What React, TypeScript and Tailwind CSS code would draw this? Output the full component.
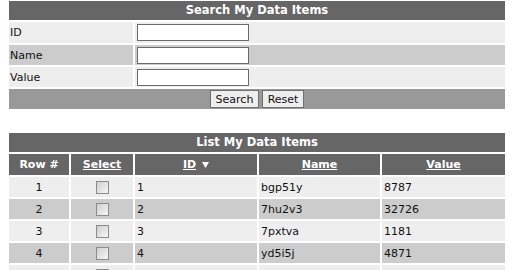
import React from "react";

const rows = [
  { n: 1, id: "1", name: "bgp51y", value: "8787" },
  { n: 2, id: "2", name: "7hu2v3", value: "32726" },
  { n: 3, id: "3", name: "7pxtva", value: "1181" },
  { n: 4, id: "4", name: "yd5i5j", value: "4871" },
  { n: 5, id: "5", name: "", value: "" },
];

function Check() {
  return (
    <div className="w-[13px] h-[13px] border border-[#8c8c8c] bg-gradient-to-br from-[#cfcfcf] to-[#f6f6f6]" />
  );
}

export default function App() {
  const font = { fontFamily: '"DejaVu Sans", Verdana, sans-serif' };
  return (
    <div className="w-[515px] h-[270px] overflow-hidden bg-white pt-[1px] pl-[9px] text-[11px] leading-none text-[#111111]" style={font}>
      <div className="w-[496px]">
        {/* Search section */}
        <div className="flex flex-col gap-[2px]">
          <div className="h-[19px] bg-[#666666] flex items-center justify-center text-white font-bold text-[11.5px]">
            Search My Data Items
          </div>
          <div className="grid grid-cols-[124px_370px] gap-[2px]">
            <div className="h-[21px] bg-[#eeeeee] flex items-center pl-[1px]">ID</div>
            <div className="h-[21px] bg-[#eeeeee] flex items-center pl-[2px]">
              <div className="w-[112px] h-[17px] border border-[#6b6b6b] bg-white" />
            </div>
            <div className="h-[20px] bg-[#cccccc] flex items-center pl-[1px]">Name</div>
            <div className="h-[20px] bg-[#cccccc] flex items-center pl-[2px]">
              <div className="w-[112px] h-[17px] border border-[#6b6b6b] bg-white" />
            </div>
            <div className="h-[20px] bg-[#eeeeee] flex items-center pl-[1px]">Value</div>
            <div className="h-[20px] bg-[#eeeeee] flex items-center pl-[2px]">
              <div className="w-[112px] h-[17px] border border-[#6b6b6b] bg-white" />
            </div>
          </div>
          <div className="h-[20px] bg-[#999999] flex items-center justify-center gap-[3px]">
            <button className="h-[18px] w-[49px] border border-[#707070] bg-[#eeeeee] text-[11px] text-[#111] leading-none flex items-center justify-center" style={font}>
              Search
            </button>
            <button className="h-[18px] w-[42px] border border-[#707070] bg-[#eeeeee] text-[11px] text-[#111] leading-none flex items-center justify-center" style={font}>
              Reset
            </button>
          </div>
        </div>

        {/* List section */}
        <div className="mt-[24px] flex flex-col gap-[2px]">
          <div className="h-[19px] bg-[#666666] flex items-center justify-center text-white font-bold text-[11.5px]">
            List My Data Items
          </div>
          <div className="grid grid-cols-[60px_62px_122px_121px_123px] gap-[2px]">
            <div className="h-[21px] bg-[#666666] flex items-center justify-center text-white font-bold">Row #</div>
            <div className="h-[21px] bg-[#666666] flex items-center justify-center text-white font-bold underline">Select</div>
            <div className="h-[21px] bg-[#666666] flex items-center justify-center text-white font-bold gap-[6px]">
              <span className="underline">ID</span>
              <svg width="7" height="6" viewBox="0 0 7 6" className="mt-[1px]">
                <polygon points="0,0 7,0 3.5,6" fill="#ffffff" />
              </svg>
            </div>
            <div className="h-[21px] bg-[#666666] flex items-center justify-center text-white font-bold underline">Name</div>
            <div className="h-[21px] bg-[#666666] flex items-center justify-center text-white font-bold underline">Value</div>
            {rows.map((r) => {
              const bg = r.n % 2 === 1 ? "bg-[#eeeeee]" : "bg-[#cccccc]";
              return (
                <React.Fragment key={r.n}>
                  <div className={`h-[20px] ${bg} flex items-center justify-center`}>{r.n === 5 ? "" : r.n}</div>
                  <div className={`h-[20px] ${bg} flex items-center justify-center`}>
                    <Check />
                  </div>
                  <div className={`h-[20px] ${bg} flex items-center pl-[2px]`}>{r.n === 5 ? "" : r.id}</div>
                  <div className={`h-[20px] ${bg} flex items-center pl-[2px]`}>{r.name}</div>
                  <div className={`h-[20px] ${bg} flex items-center pl-[2px]`}>{r.value}</div>
                </React.Fragment>
              );
            })}
          </div>
        </div>
      </div>
    </div>
  );
}
